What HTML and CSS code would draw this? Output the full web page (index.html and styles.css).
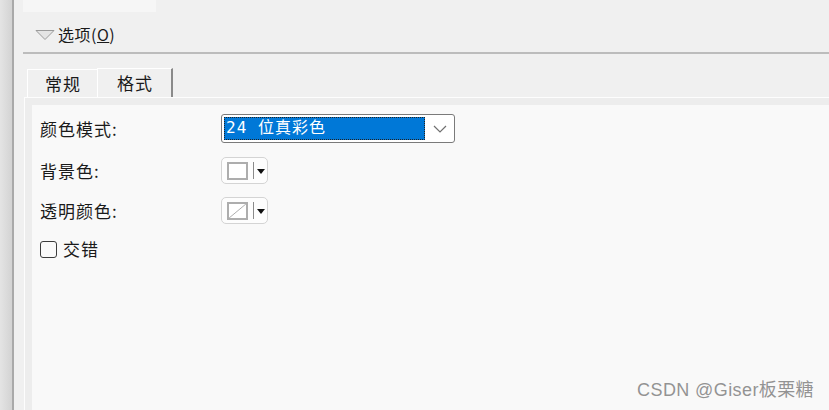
FILE: index.html
```html
<!DOCTYPE html>
<html lang="zh">
<head>
<meta charset="utf-8">
<link rel="stylesheet" href="styles.css">
</head>
<body>
<div class="app">
  <div class="edge"></div>
  <div class="main">
    <div class="topbox"></div>
    <div class="section-head">
      <svg class="tri" width="20" height="10" viewBox="0 0 20 10"><path d="M1 0.5 H19 L10 9.5 Z" fill="#e4e4e4" stroke="#9a9a9a" stroke-width="1"/></svg>
      <span class="head-text">选项(<span class="mn">O</span>)</span>
    </div>
    <div class="rule"></div>
    <div class="tabs">
      <div class="tab">常规</div>
      <div class="tab active">格式</div>
    </div>
    <div class="panel">
      <div class="panel-inner">
        <div class="row r1">
          <div class="label">颜色模式:</div>
          <div class="combo">
            <div class="sel">24 位真彩色</div>
            <svg class="chev" width="14" height="8" viewBox="0 0 14 8"><path d="M1 1 L7 7 L13 1" fill="none" stroke="#707070" stroke-width="1.2"/></svg>
          </div>
        </div>
        <div class="row r2">
          <div class="label">背景色:</div>
          <div class="cbtn">
            <div class="swatch"></div>
            <div class="sep"></div>
            <div class="arrow"></div>
          </div>
        </div>
        <div class="row r3">
          <div class="label">透明颜色:</div>
          <div class="cbtn">
            <div class="swatch">
              <svg width="18" height="15" viewBox="0 0 18 15"><path d="M0 15 L18 0" stroke="#a8a8a8" stroke-width="1"/></svg>
            </div>
            <div class="sep"></div>
            <div class="arrow"></div>
          </div>
        </div>
        <div class="row r4">
          <div class="check"></div>
          <div class="check-label">交错</div>
        </div>
      </div>
    </div>
  </div>
</div>
<div class="watermark">CSDN @Giser板栗糖</div>
</body>
</html>
```

FILE: styles.css
```css
html, body {
  margin: 0;
  padding: 0;
}
body {
  width: 829px;
  height: 410px;
  overflow: hidden;
  position: relative;
  font-family: "Noto Sans CJK SC", "Noto Sans", sans-serif;
  color: #1a1a1a;
  background: #f0f0f0;
}
.app {
  display: flex;
  height: 410px;
}
.edge {
  width: 12px;
  background: linear-gradient(to right, #e4e4e4, #d3d3d3);
  border-right: 2px solid #a9a9a9;
  flex: none;
}
.main {
  flex: 1;
  display: flex;
  flex-direction: column;
  padding-left: 9px;
  min-width: 0;
}
.topbox {
  width: 133px;
  height: 12px;
  background: #f6f6f6;
  flex: none;
}
.section-head {
  height: 40px;
  display: flex;
  align-items: center;
  padding-left: 12px;
  padding-top: 4px;
  box-sizing: border-box;
  flex: none;
}
.tri {
  display: block;
  margin-right: 3px;
  margin-top: 1px;
}
.head-text {
  font-size: 16px;
  letter-spacing: 0.5px;
  line-height: 22px;
}
.mn {
  text-decoration: underline;
  text-underline-offset: 1px;
}
.rule {
  height: 2px;
  background: #bcbcbc;
  flex: none;
}
.tabs {
  display: flex;
  margin-top: 14px;
  height: 29px;
  padding-left: 4px;
  flex: none;
  align-items: flex-end;
}
.tab {
  width: 70px;
  height: 28px;
  box-sizing: border-box;
  border-top: 1px solid #ffffff;
  border-left: 1px solid #ffffff;
  font-size: 17px;
  letter-spacing: 1px;
  line-height: 27px;
  text-align: center;
  padding-left: 1px;
}
.tab.active {
  width: 76px;
  height: 29px;
  border-right: 2px solid #8a8a8a;
}
.panel {
  flex: 1;
  margin-left: 1px;
  border-top: 1px solid #fdfdfd;
  border-left: 1px solid #fdfdfd;
  background: #ededed;
  padding: 7px 0 0 7px;
  display: flex;
  flex-direction: column;
}
.panel-inner {
  flex: 1;
  background: #f9f9f9;
  padding: 9px 0 0 8px;
}
.row {
  display: flex;
  align-items: center;
}
.r1 { height: 29px; }
.r2 { height: 27px; margin-top: 14px; }
.r3 { height: 27px; margin-top: 13px; }
.r4 { height: 30px; margin-top: 10px; }
.label {
  width: 181px;
  font-size: 17px;
  letter-spacing: 1px;
  line-height: 22px;
  flex: none;
}
.combo {
  width: 234px;
  height: 29px;
  box-sizing: border-box;
  border: 1px solid #7a7a7a;
  border-radius: 3px;
  background: #ffffff;
  padding: 2px;
  display: flex;
  align-items: center;
}
.sel {
  width: 201px;
  height: 23px;
  box-sizing: border-box;
  background: #0078d7;
  border: 1px dotted #f28a1a;
  outline: 1px dotted #222;
  outline-offset: -1px;
  color: #ffffff;
  font-family: "DejaVu Sans Mono", "Noto Sans CJK SC", monospace;
  font-size: 16px;
  line-height: 20px;
  letter-spacing: 1px;
  padding-left: 1px;
  white-space: nowrap;
  overflow: hidden;
}
.chev {
  display: block;
  margin-left: 8px;
}
.cbtn {
  width: 47px;
  height: 27px;
  box-sizing: border-box;
  border: 1px solid #d4d4d4;
  border-radius: 5px;
  background: #fdfdfd;
  display: flex;
  align-items: center;
  padding-left: 5px;
}
.swatch {
  width: 21px;
  height: 18px;
  box-sizing: border-box;
  border: 2px solid #adadad;
  background: #ffffff;
  position: relative;
  overflow: hidden;
}
.swatch svg {
  display: block;
  width: 17px;
  height: 14px;
}
.sep {
  width: 1px;
  height: 17px;
  background: #8a8a8a;
  margin-left: 5px;
}
.arrow {
  width: 0;
  height: 0;
  border-left: 4px solid transparent;
  border-right: 4px solid transparent;
  border-top: 5px solid #111;
  margin-left: 3px;
  margin-top: 1px;
}
.check {
  width: 17px;
  height: 17px;
  box-sizing: border-box;
  border: 1px solid #3c3c3c;
  border-radius: 3px;
  background: #fafafa;
}
.check-label {
  margin-left: 6px;
  font-size: 17px;
  letter-spacing: 1px;
  line-height: 22px;
}
.watermark {
  position: absolute;
  right: 15px;
  bottom: 9px;
  font-family: "Liberation Sans", "Noto Sans CJK SC", sans-serif;
  font-size: 18px;
  letter-spacing: 0.4px;
  color: #939393;
  text-shadow: 0 0 1px #ffffff;
  white-space: nowrap;
}
```
